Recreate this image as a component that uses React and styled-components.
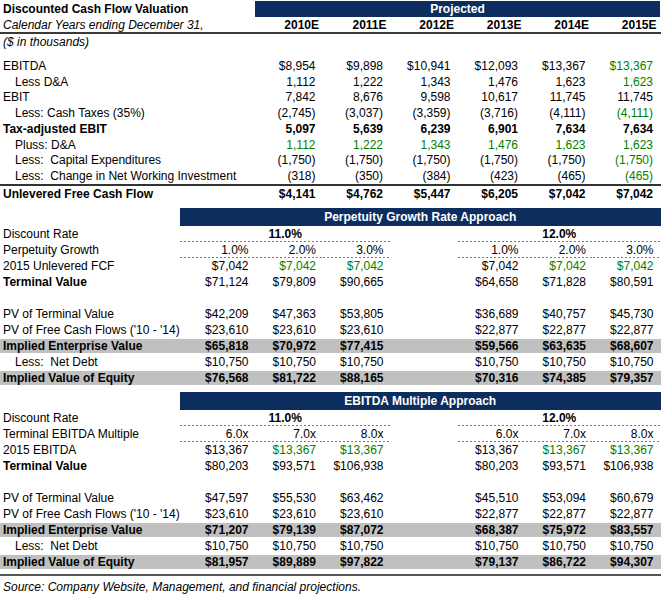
import React from 'react';
import styled, { createGlobalStyle } from 'styled-components';

const NAVY = '#0c2d5e';
const GREEN = '#008000';
const SHADE = '#c0c0c0';

const TOP_COLS = '255px repeat(6, 67.5px)';
const SENS_COLS = '180px 75.5px repeat(6, 67.5px)';

const GlobalStyle = createGlobalStyle`
  body {
    margin: 0;
    background: #fff;
    color: #000;
    font-family: 'Liberation Sans', Arial, sans-serif;
    font-size: 12px;
  }
`;

const Page = styled.div`
  width: 661px;
  display: flex;
  flex-direction: column;
  padding-top: 1px;
`;

const Row = styled.div`
  display: grid;
  grid-template-columns: ${(p) => p.$cols};
  height: ${(p) => p.$h || 16}px;
  box-sizing: border-box;
  font-weight: ${(p) => (p.$bold ? 700 : 400)};
  font-style: ${(p) => (p.$italic ? 'italic' : 'normal')};
  background: ${(p) => (p.$shade ? SHADE : 'transparent')};
  border-top: ${(p) => (p.$rule ? '2px solid #333' : p.$shade ? '1px solid #fff' : 'none')};
  border-bottom: ${(p) => (p.$underline ? '2px solid #3a3a3a' : p.$shade ? '1px solid #fff' : 'none')};
`;

const Spacer = styled.div`
  height: ${(p) => p.$h}px;
`;

const Label = styled.div`
  display: flex;
  align-items: center;
  padding-left: ${(p) => (p.$indent ? 15 : 3)}px;
  white-space: pre;
  font-weight: ${(p) => (p.$bold ? 700 : 'inherit')};
`;

const dashes = `linear-gradient(to right, #7a7a7a 60%, transparent 0) bottom left / 4px 1px repeat-x`;

const Num = styled.div`
  display: flex;
  align-items: center;
  justify-content: flex-end;
  padding-right: ${(p) => (p.$head ? 3.5 : 7)}px;
  color: ${(p) => (p.$green ? GREEN : 'inherit')};
  background: ${(p) => (p.$dash ? dashes : 'none')};
  white-space: pre;
`;

const Rate = styled.div`
  grid-column: ${(p) => p.$col} / span 3;
  display: flex;
  align-items: center;
  justify-content: center;
  font-weight: 700;
  background: ${dashes};
`;

const Bar = styled.div`
  grid-column: 2 / -1;
  display: flex;
  align-items: center;
  justify-content: center;
  background: ${NAVY};
  color: #fff;
  font-weight: 700;
`;

const Source = styled.div`
  margin-top: 4px;
  border-top: 2px solid #555;
  padding: 3px 0 0 3px;
  font-style: italic;
  height: 16px;
  display: flex;
  align-items: center;
`;

const years = ['2010E', '2011E', '2012E', '2013E', '2014E', '2015E'];

const cashFlow = [
  { label: 'EBITDA', vals: ['$8,954', '$9,898', '$10,941', '$12,093', '$13,367', '$13,367'], green: 'last' },
  { label: 'Less D&A', indent: true, vals: ['1,112', '1,222', '1,343', '1,476', '1,623', '1,623'], green: 'last' },
  { label: 'EBIT', vals: ['7,842', '8,676', '9,598', '10,617', '11,745', '11,745'] },
  { label: 'Less: Cash Taxes (35%)', indent: true, vals: ['(2,745)', '(3,037)', '(3,359)', '(3,716)', '(4,111)', '(4,111)'], green: 'last' },
  { label: 'Tax-adjusted EBIT', bold: true, vals: ['5,097', '5,639', '6,239', '6,901', '7,634', '7,634'] },
  { label: 'Pluss: D&A', indent: true, vals: ['1,112', '1,222', '1,343', '1,476', '1,623', '1,623'], green: 'all' },
  { label: 'Less:  Capital Expenditures', indent: true, vals: ['(1,750)', '(1,750)', '(1,750)', '(1,750)', '(1,750)', '(1,750)'], green: 'last' },
  { label: 'Less:  Change in Net Working Investment', indent: true, vals: ['(318)', '(350)', '(384)', '(423)', '(465)', '(465)'], green: 'last' },
];

const SPLIT_GREEN = [false, true, true, null, false, true, true];

const perpetuity = {
  title: 'Perpetuity Growth Rate Approach',
  driver: { label: 'Perpetuity Growth', vals: ['1.0%', '2.0%', '3.0%', null, '1.0%', '2.0%', '3.0%'] },
  base: { label: '2015 Unlevered FCF', vals: ['$7,042', '$7,042', '$7,042', null, '$7,042', '$7,042', '$7,042'] },
  terminal: ['$71,124', '$79,809', '$90,665', null, '$64,658', '$71,828', '$80,591'],
  pvTerminal: ['$42,209', '$47,363', '$53,805', null, '$36,689', '$40,757', '$45,730'],
  pvFlows: ['$23,610', '$23,610', '$23,610', null, '$22,877', '$22,877', '$22,877'],
  ev: ['$65,818', '$70,972', '$77,415', null, '$59,566', '$63,635', '$68,607'],
  equity: ['$76,568', '$81,722', '$88,165', null, '$70,316', '$74,385', '$79,357'],
};

const multiple = {
  title: 'EBITDA Multiple Approach',
  driver: { label: 'Terminal EBITDA Multiple', vals: ['6.0x', '7.0x', '8.0x', null, '6.0x', '7.0x', '8.0x'] },
  base: { label: '2015 EBITDA', vals: ['$13,367', '$13,367', '$13,367', null, '$13,367', '$13,367', '$13,367'] },
  terminal: ['$80,203', '$93,571', '$106,938', null, '$80,203', '$93,571', '$106,938'],
  pvTerminal: ['$47,597', '$55,530', '$63,462', null, '$45,510', '$53,094', '$60,679'],
  pvFlows: ['$23,610', '$23,610', '$23,610', null, '$22,877', '$22,877', '$22,877'],
  ev: ['$71,207', '$79,139', '$87,072', null, '$68,387', '$75,972', '$83,557'],
  equity: ['$81,957', '$89,889', '$97,822', null, '$79,137', '$86,722', '$94,307'],
};

const netDebt = ['$10,750', '$10,750', '$10,750', null, '$10,750', '$10,750', '$10,750'];

const Cells = ({ vals, green, dash }) =>
  vals.map((v, i) => (
    <Num key={i} $green={green && green[i]} $dash={dash && v !== null}>
      {v}
    </Num>
  ));

const SensRow = ({ label, vals, bold, labelBold, shade, indent, green, dash }) => (
  <Row $cols={SENS_COLS} $bold={bold} $shade={shade}>
    <Label $indent={indent} $bold={labelBold}>{label}</Label>
    <Cells vals={vals} green={green} dash={dash} />
  </Row>
);

const Sensitivity = ({ data }) => (
  <>
    <Row $cols={SENS_COLS} $h={18}>
      <div />
      <Bar>{data.title}</Bar>
    </Row>
    <Row $cols={SENS_COLS}>
      <Label>Discount Rate</Label>
      <Rate $col={2}>11.0%</Rate>
      <Rate $col={6}>12.0%</Rate>
    </Row>
    <SensRow label={data.driver.label} vals={data.driver.vals} dash />
    <SensRow label={data.base.label} vals={data.base.vals} green={SPLIT_GREEN} />
    <SensRow label="Terminal Value" labelBold vals={data.terminal} />
    <Spacer $h={16} />
    <SensRow label="PV of Terminal Value" vals={data.pvTerminal} />
    <SensRow label="PV of Free Cash Flows ('10 - '14)" vals={data.pvFlows} />
    <SensRow label="Implied Enterprise Value" bold shade vals={data.ev} />
    <SensRow label="Less:  Net Debt" indent vals={netDebt} />
    <SensRow label="Implied Value of Equity" bold shade vals={data.equity} />
  </>
);

export default function App() {
  return (
    <Page>
      <GlobalStyle />
      <Row $cols={TOP_COLS}>
        <Label $bold>Discounted Cash Flow Valuation</Label>
        <Bar>Projected</Bar>
      </Row>
      <Row $cols={TOP_COLS} $h={17} $underline>
        <Label style={{ fontStyle: 'italic' }}>Calendar Years ending December 31,</Label>
        {years.map((y) => (
          <Num key={y} $head style={{ fontWeight: 700 }}>{y}</Num>
        ))}
      </Row>
      <Row $cols={TOP_COLS} $italic>
        <Label>($ in thousands)</Label>
      </Row>
      <Spacer $h={8} />
      {cashFlow.map((r) => (
        <Row key={r.label} $cols={TOP_COLS} $h={15.75} $bold={r.bold}>
          <Label $indent={r.indent}>{r.label}</Label>
          {r.vals.map((v, i) => (
            <Num key={i} $green={r.green === 'all' || (r.green === 'last' && i === 5)}>{v}</Num>
          ))}
        </Row>
      ))}
      <Row $cols={TOP_COLS} $h={18} $bold $rule>
        <Label>Unlevered Free Cash Flow</Label>
        {['$4,141', '$4,762', '$5,447', '$6,205', '$7,042', '$7,042'].map((v, i) => (
          <Num key={i}>{v}</Num>
        ))}
      </Row>
      <Spacer $h={6} />
      <Sensitivity data={perpetuity} />
      <Spacer $h={6} />
      <Sensitivity data={multiple} />
      <Source>Source: Company Website, Management, and financial projections.</Source>
    </Page>
  );
}
